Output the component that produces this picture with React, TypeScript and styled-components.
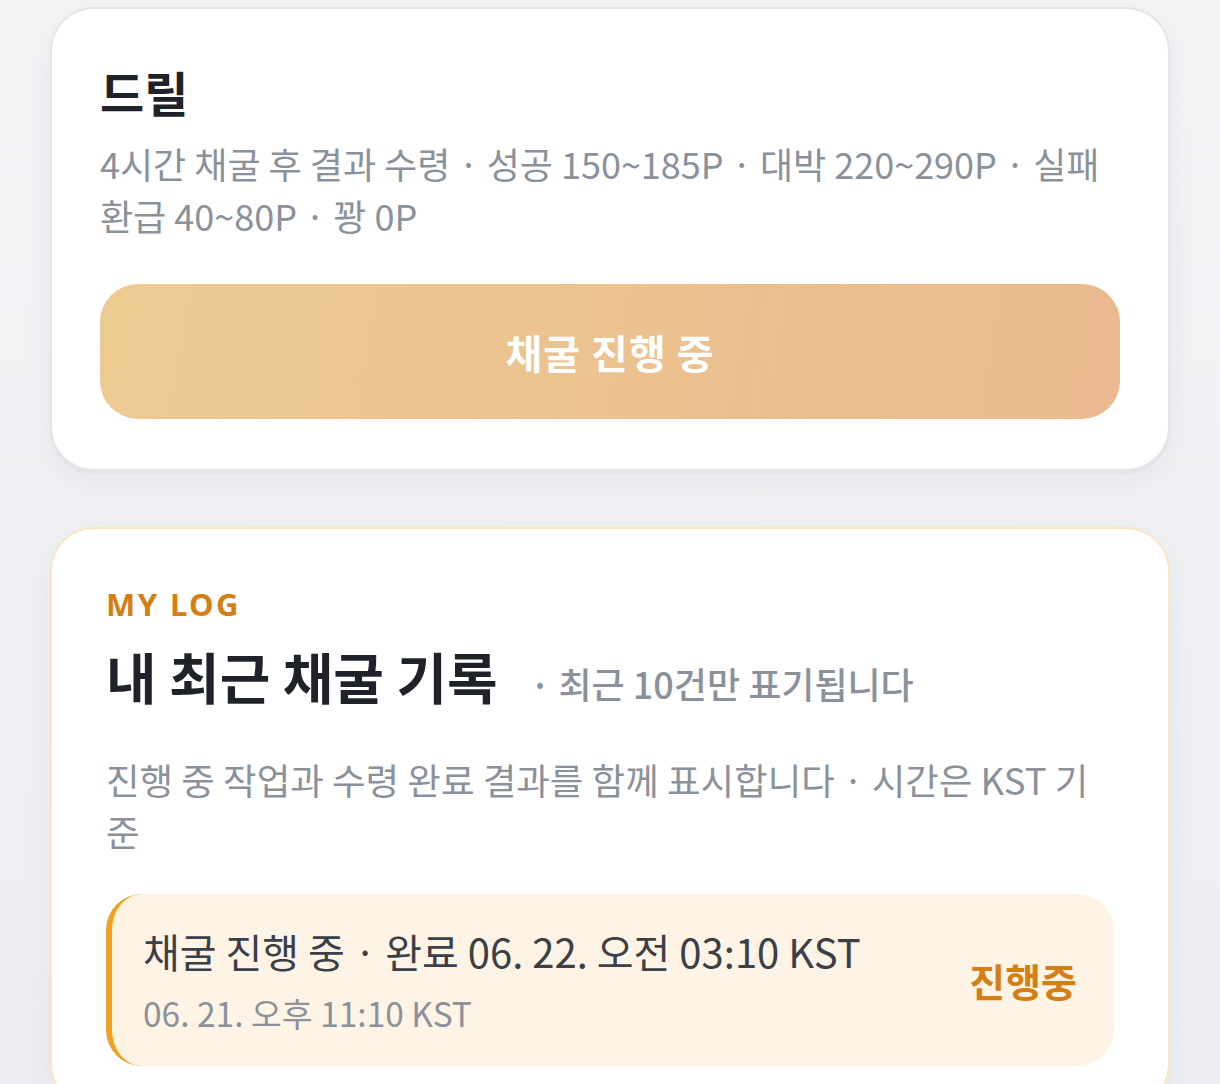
import React from "react";
import styled, { createGlobalStyle } from "styled-components";

const Global = createGlobalStyle`
  html, body { margin: 0; padding: 0; background: #eef0f3; }
  body { font-family: "Noto Sans CJK KR", "Noto Sans", sans-serif; -webkit-font-smoothing: antialiased; }
  * { box-sizing: border-box; }
`;

const Page = styled.div`
  display: flex;
  flex-direction: column;
  gap: 56px;
  padding: 7px 50px 40px 50px;
  width: 1220px;
  min-height: 1084px;
  background: linear-gradient(180deg, #f2f3f5 0%, #eceef1 100%);
`;

const Card = styled.section<{ $accent?: boolean }>`
  background: #ffffff;
  border: 2px solid ${(p) => (p.$accent ? "#fbe6c2" : "#e3e5e9")};
  border-radius: 44px;
  box-shadow: 0 3px 0 ${(p) => (p.$accent ? "rgba(0,0,0,0)" : "#e2e4e8")},
    0 10px 30px rgba(30, 40, 60, 0.05);
  padding: ${(p) => (p.$accent ? "57px 54px 40px 54px" : "50px 48px 50px 48px")};
  display: flex;
  flex-direction: column;
`;

const ItemTitle = styled.h2`
  margin: 0;
  font-size: 48px;
  font-weight: 700;
  color: #1f2329;
  line-height: 64px;
`;

const Desc = styled.p<{ $top?: number; $size?: number }>`
  margin: ${(p) => p.$top ?? 0}px 0 0 0;
  font-size: ${(p) => p.$size ?? 36}px;
  font-weight: 400;
  color: #8b919b;
  line-height: 52px;
`;

const ActionButton = styled.button`
  margin-top: 43px;
  height: 135px;
  width: 100%;
  border: none;
  border-radius: 38px;
  background: linear-gradient(100deg, #eccb91 0%, #eab98f 100%);
  color: #ffffff;
  font-family: inherit;
  font-size: 40px;
  font-weight: 700;
  letter-spacing: 1px;
`;

const Eyebrow = styled.div`
  font-size: 31px;
  font-weight: 700;
  color: #d47f16;
  letter-spacing: 2.4px;
  line-height: 36px;
  font-family: "Noto Sans", "Noto Sans CJK KR", sans-serif;
`;

const TitleRow = styled.div`
  margin-top: 15px;
  display: flex;
  align-items: baseline;
  gap: 32px;
`;

const SectionTitle = styled.h2`
  margin: 0;
  font-size: 55px;
  font-weight: 700;
  color: #1f2329;
  line-height: 76px;
`;

const SubNote = styled.span`
  font-size: 36px;
  font-weight: 500;
  color: #8b919b;
`;

const LogList = styled.div`
  margin-top: 36px;
  display: flex;
  flex-direction: column;
  gap: 20px;
`;

const LogItem = styled.div`
  display: flex;
  align-items: center;
  justify-content: space-between;
  background: #fef4e5;
  border-left: 6px solid #f0a11e;
  border-radius: 36px;
  padding: 0 37px 0 31px;
  height: 172px;
`;

const LogText = styled.div`
  display: flex;
  flex-direction: column;
  gap: 12px;
`;

const LogMain = styled.div`
  font-size: 40px;
  color: #3b3f47;
  line-height: 54px;
`;

const LogSub = styled.div`
  font-size: 33.5px;
  color: #8b919b;
  line-height: 46px;
`;

const Status = styled.div`
  font-size: 39px;
  font-weight: 700;
  color: #d47f16;
`;

export default function App() {
  return (
    <>
      <Global />
      <Page>
        <Card>
          <ItemTitle>드릴</ItemTitle>
          <Desc $top={14} $size={36}>
            4시간 채굴 후 결과 수령 · 성공 150~185P · 대박 220~290P · 실패 환급 40~80P · 꽝 0P
          </Desc>
          <ActionButton>채굴 진행 중</ActionButton>
        </Card>
        <Card $accent>
          <Eyebrow>MY LOG</Eyebrow>
          <TitleRow>
            <SectionTitle>내 최근 채굴 기록</SectionTitle>
            <SubNote>· 최근 10건만 표기됩니다</SubNote>
          </TitleRow>
          <Desc $top={41} $size={36.5}>
            진행 중 작업과 수령 완료 결과를 함께 표시합니다 · 시간은 KST 기준
          </Desc>
          <LogList>
            <LogItem>
              <LogText>
                <LogMain>채굴 진행 중 · 완료 06. 22. 오전 03:10 KST</LogMain>
                <LogSub>06. 21. 오후 11:10 KST</LogSub>
              </LogText>
              <Status>진행중</Status>
            </LogItem>
          </LogList>
        </Card>
      </Page>
    </>
  );
}
